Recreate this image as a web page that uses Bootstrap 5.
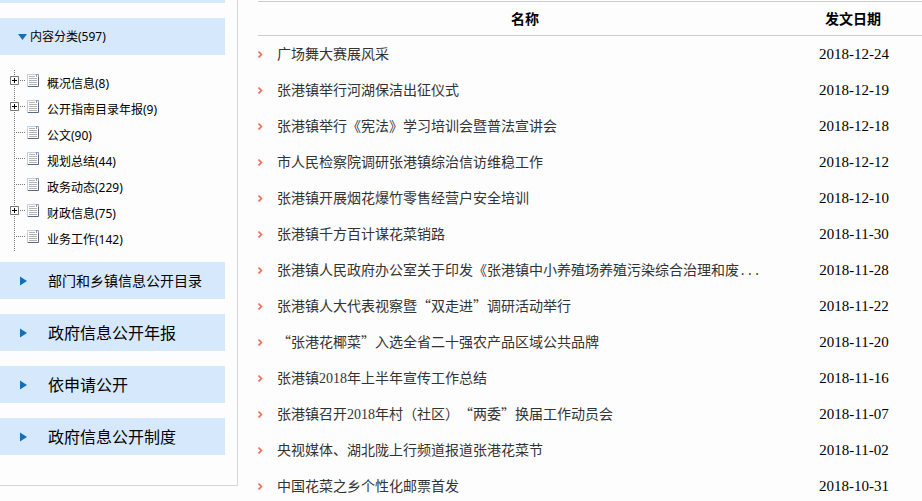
<!DOCTYPE html>
<html lang="zh-CN">
<head>
<meta charset="utf-8">
<meta name="viewport" content="width=device-width, initial-scale=1">
<title>政府信息公开目录</title>
<link rel="stylesheet" href="https://cdn.jsdelivr.net/npm/bootstrap@5.3.0/dist/css/bootstrap.min.css">
<style>
  body { background: #fdfdfd; color: #000; font-family: "Noto Sans", "Noto Sans CJK SC", sans-serif; font-size: 14px; line-height: 20px; }
  a { color: inherit; text-decoration: none; }
  a:hover { text-decoration: underline; }
  .side-panel { width: 238px; padding: 0 12px 30px 0; border: solid #d6d6d6; border-width: 0 1px 1px 0; }
  .side-tail { height: 3px; margin-bottom: 15px; background: #d6e8fb; }
  .side-bar { height: 37px; margin-bottom: 15px; padding-left: 20px; background: #d6e8fb; }
  .side-bar a { font-size: 16px; }
  .side-bar .side-long { font-size: 14px; }
  .side-bar .arrow-icon { margin-right: 20px; }
  .side-bar.side-open { padding-left: 18px; }
  .side-bar.side-open a { font-size: 12px; }
  .side-bar.side-open .arrow-icon { margin-right: 2px; }
  .tree-list { margin-bottom: 10px; font-size: 12px; line-height: 24px; }
  .tree-list a { padding-top: 2px; }
  .tree-list svg { margin-right: 5px; }
  .main-panel { padding: 1px 0 0 20px; min-width: 0; }
  .doc-table { border-top: 1px solid #ccc; table-layout: fixed; }
  .doc-table th { height: 34px; padding: 0; border-bottom: 1px solid #ccc; text-align: center; font-size: 14px; font-weight: 700; }
  .doc-table td { height: 36px; padding: 0; color: #333; }
  .doc-table .date-col { width: 130px; padding-right: 8px; text-align: center; }
  .doc-table td.date-col { padding-right: 6px; color: #000; font-family: "Liberation Serif", serif; font-size: 15px; }
  .doc-table a { padding-bottom: 2px; font-family: "Noto Sans CJK SC", sans-serif; text-spacing-trim: space-all; }
  .doc-table td svg { margin-right: 13px; }
  .num { font-family: "Liberation Serif", serif; line-height: 1; }
  .dots { font-family: "Liberation Mono", monospace; font-size: 12px; line-height: 1; }
</style>
<script src="https://cdn.jsdelivr.net/npm/bootstrap@5.3.0/dist/js/bootstrap.bundle.min.js"></script>
</head>
<body>
<svg width="0" height="0" class="d-none" aria-hidden="true">
  <symbol id="page" viewBox="0 0 42 26">
    <path d="M14.500 0v26" stroke="#777" stroke-dasharray="1 1" fill="none"/>
    <path d="M16 10.500h10" stroke="#777" stroke-dasharray="1 1" fill="none"/>
    <path d="M27 4h9l3 3v10H27z" fill="#fff"/>
    <path d="M27.500 17V4.500H36" stroke="#c3cde0" fill="none"/>
    <path d="M36 4.500h2.500V7M36.500 4v3" stroke="#8a99b5" fill="none"/>
    <path d="M38.500 7v9.500H28" stroke="#566985" fill="none"/>
    <path d="M29 6.500h6M29 8.500h8M29 10.500h8M29 12.500h8M29 14.500h8" stroke="#b3b3b3" fill="none"/>
  </symbol>
  <symbol id="plus" viewBox="0 0 42 26">
    <use href="#page" width="42" height="26"/>
    <path d="M10.500 6.500h8v8h-8z" stroke="#777" fill="#fff"/>
    <path d="M12 10.500h5M14.500 8v5" stroke="#000" fill="none"/>
  </symbol>
  <symbol id="right" viewBox="0 0 8 10"><path d="M0 0.500L7 5L0 9.500z" fill="#156fb8"/></symbol>
  <symbol id="down" viewBox="0 0 10 8"><path d="M0 1h9L4.500 7z" fill="#156fb8"/></symbol>
  <symbol id="chev" viewBox="0 0 6 8"><path d="M0.500 1.500L3.500 4.500L0.500 7.500" fill="none" stroke="#f4694f" stroke-width="1.600"/></symbol>
</svg>
<div class="d-flex align-items-start">
  <aside class="side-panel flex-shrink-0">
    <div class="side-tail"></div>
    <div class="side-bar side-open d-flex align-items-center"><svg class="arrow-icon" width="10" height="8"><use href="#down"/></svg><a href="#">内容分类(597)</a></div>
    <ul class="tree-list list-unstyled">
      <li class="d-flex"><svg width="42" height="26"><use href="#plus"/></svg><a href="#">概况信息(8)</a></li>
      <li class="d-flex"><svg width="42" height="26"><use href="#plus"/></svg><a href="#">公开指南目录年报(9)</a></li>
      <li class="d-flex"><svg width="42" height="26"><use href="#page"/></svg><a href="#">公文(90)</a></li>
      <li class="d-flex"><svg width="42" height="26"><use href="#page"/></svg><a href="#">规划总结(44)</a></li>
      <li class="d-flex"><svg width="42" height="26"><use href="#page"/></svg><a href="#">政务动态(229)</a></li>
      <li class="d-flex"><svg width="42" height="26"><use href="#plus"/></svg><a href="#">财政信息(75)</a></li>
      <li class="d-flex"><svg width="42" height="26"><use href="#page"/></svg><a href="#">业务工作(142)</a></li>
    </ul>
    <div class="side-bar d-flex align-items-center"><svg class="arrow-icon" width="8" height="10"><use href="#right"/></svg><a class="side-long" href="#">部门和乡镇信息公开目录</a></div>
    <div class="side-bar d-flex align-items-center"><svg class="arrow-icon" width="8" height="10"><use href="#right"/></svg><a href="#">政府信息公开年报</a></div>
    <div class="side-bar d-flex align-items-center"><svg class="arrow-icon" width="8" height="10"><use href="#right"/></svg><a href="#">依申请公开</a></div>
    <div class="side-bar d-flex align-items-center mb-0"><svg class="arrow-icon" width="8" height="10"><use href="#right"/></svg><a href="#">政府信息公开制度</a></div>
  </aside>
  <main class="main-panel flex-grow-1">
    <table class="doc-table w-100">
      <thead><tr><th scope="col">名称</th><th scope="col" class="date-col">发文日期</th></tr></thead>
      <tbody>
        <tr><td><div class="d-flex align-items-center"><svg width="6" height="8"><use href="#chev"/></svg><a href="#">广场舞大赛展风采</a></div></td><td class="date-col">2018-12-24</td></tr>
        <tr><td><div class="d-flex align-items-center"><svg width="6" height="8"><use href="#chev"/></svg><a href="#">张港镇举行河湖保洁出征仪式</a></div></td><td class="date-col">2018-12-19</td></tr>
        <tr><td><div class="d-flex align-items-center"><svg width="6" height="8"><use href="#chev"/></svg><a href="#">张港镇举行《宪法》学习培训会暨普法宣讲会</a></div></td><td class="date-col">2018-12-18</td></tr>
        <tr><td><div class="d-flex align-items-center"><svg width="6" height="8"><use href="#chev"/></svg><a href="#">市人民检察院调研张港镇综治信访维稳工作</a></div></td><td class="date-col">2018-12-12</td></tr>
        <tr><td><div class="d-flex align-items-center"><svg width="6" height="8"><use href="#chev"/></svg><a href="#">张港镇开展烟花爆竹零售经营户安全培训</a></div></td><td class="date-col">2018-12-10</td></tr>
        <tr><td><div class="d-flex align-items-center"><svg width="6" height="8"><use href="#chev"/></svg><a href="#">张港镇千方百计谋花菜销路</a></div></td><td class="date-col">2018-11-30</td></tr>
        <tr><td><div class="d-flex align-items-center"><svg width="6" height="8"><use href="#chev"/></svg><a href="#">张港镇人民政府办公室关于印发《张港镇中小养殖场养殖污染综合治理和废<span class="dots">...</span></a></div></td><td class="date-col">2018-11-28</td></tr>
        <tr><td><div class="d-flex align-items-center"><svg width="6" height="8"><use href="#chev"/></svg><a href="#">张港镇人大代表视察暨“双走进”调研活动举行</a></div></td><td class="date-col">2018-11-22</td></tr>
        <tr><td><div class="d-flex align-items-center"><svg width="6" height="8"><use href="#chev"/></svg><a href="#">“张港花椰菜”入选全省二十强农产品区域公共品牌</a></div></td><td class="date-col">2018-11-20</td></tr>
        <tr><td><div class="d-flex align-items-center"><svg width="6" height="8"><use href="#chev"/></svg><a href="#">张港镇<span class="num">2018</span>年上半年宣传工作总结</a></div></td><td class="date-col">2018-11-16</td></tr>
        <tr><td><div class="d-flex align-items-center"><svg width="6" height="8"><use href="#chev"/></svg><a href="#">张港镇召开<span class="num">2018</span>年村（社区）“两委”换届工作动员会</a></div></td><td class="date-col">2018-11-07</td></tr>
        <tr><td><div class="d-flex align-items-center"><svg width="6" height="8"><use href="#chev"/></svg><a href="#">央视媒体、湖北陇上行频道报道张港花菜节</a></div></td><td class="date-col">2018-11-02</td></tr>
        <tr><td><div class="d-flex align-items-center"><svg width="6" height="8"><use href="#chev"/></svg><a href="#">中国花菜之乡个性化邮票首发</a></div></td><td class="date-col">2018-10-31</td></tr>
      </tbody>
    </table>
  </main>
</div>
</body>
</html>
